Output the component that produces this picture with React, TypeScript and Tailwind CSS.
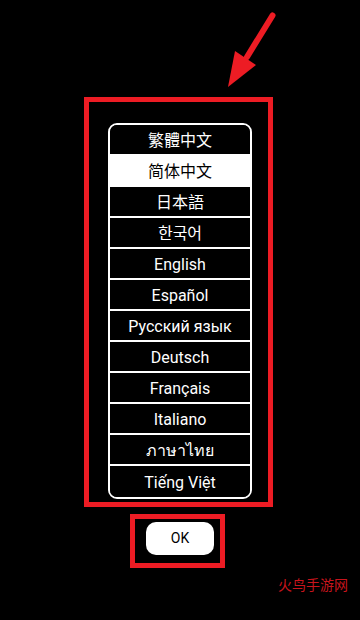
const languages = [
  "繁體中文",
  "简体中文",
  "日本語",
  "한국어",
  "English",
  "Español",
  "Русский язык",
  "Deutsch",
  "Français",
  "Italiano",
  "ภาษาไทย",
  "Tiếng Việt",
];

const selected = 1;

export default function App() {
  return (
    <div
      className="relative w-[360px] h-[620px] bg-black overflow-hidden"
      style={{ fontFamily: 'Roboto, "Noto Sans CJK SC", "Noto Sans", sans-serif' }}
    >
      {/* annotation arrow */}
      <svg className="absolute left-0 top-0" width="360" height="100" viewBox="0 0 360 100">
        <line x1="272.5" y1="15.5" x2="247" y2="57" stroke="#ed1c24" strokeWidth="6" strokeLinecap="round" />
        <polygon points="228,87 235,51 256,65" fill="#ed1c24" />
      </svg>

      <div className="flex flex-col pt-[97px]">
        {/* language list */}
        <div className="ml-[84px] w-[189px] h-[410px] border-[5px] border-[#ed1c24] pl-[19px] pr-[16px] pt-[21px]">
          <div className="w-[144px] border-2 border-white rounded-[9px] overflow-hidden divide-y-2 divide-white">
            {languages.map((lang, i) => (
              <div
                key={lang}
                className={
                  i === selected
                    ? "h-[31px] pt-[3px] flex items-center justify-center bg-white text-black text-[16px]"
                    : "h-[31px] pt-[3px] flex items-center justify-center bg-black text-white text-[16px]"
                }
              >
                {lang}
              </div>
            ))}
          </div>
        </div>

        {/* OK button */}
        <div className="mt-[7px] ml-[130px] w-[95px] h-[54px] border-[5px] border-[#ed1c24] pl-[11px] pt-[3px]">
          <button className="w-[68px] h-[33px] rounded-[10px] bg-white text-black text-[14px] flex items-center justify-center">
            OK
          </button>
        </div>
      </div>

      {/* watermark */}
      <div
        className="absolute left-[278px] top-[575px] text-[14px] leading-[18px] text-[#c8141c]"
        style={{ fontFamily: '"Noto Sans CJK SC", sans-serif' }}
      >
        火鸟手游网
      </div>
    </div>
  );
}
